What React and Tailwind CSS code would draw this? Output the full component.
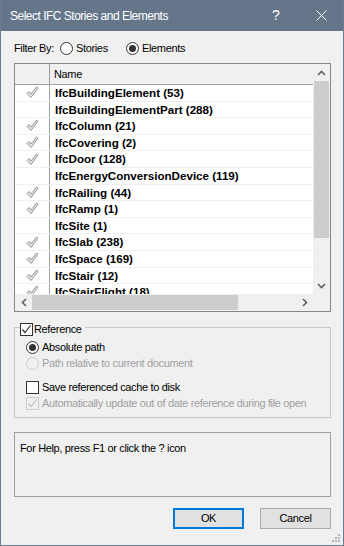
import React from "react";

const rows = [
  { name: "IfcBuildingElement (53)", checked: true },
  { name: "IfcBuildingElementPart (288)", checked: false },
  { name: "IfcColumn (21)", checked: true },
  { name: "IfcCovering (2)", checked: true },
  { name: "IfcDoor (128)", checked: true },
  { name: "IfcEnergyConversionDevice (119)", checked: false },
  { name: "IfcRailing (44)", checked: true },
  { name: "IfcRamp (1)", checked: true },
  { name: "IfcSite (1)", checked: false },
  { name: "IfcSlab (238)", checked: true },
  { name: "IfcSpace (169)", checked: true },
  { name: "IfcStair (12)", checked: true },
  { name: "IfcStairFlight (18)", checked: true },
];

const Tick = () => (
  <svg width="13" height="13" viewBox="0 0 13 13">
    <polygon
      points="1,7.5 3,5.5 5,8 10.5,1 12,2.2 5,11.5"
      fill="#e2e2e2"
      stroke="#8c8c8c"
      strokeWidth="0.9"
      strokeLinejoin="round"
    />
  </svg>
);

const Radio = ({ checked, disabled }) => (
  <span
    className={`w-[13px] h-[13px] rounded-full border flex items-center justify-center shrink-0 ${
      disabled ? "border-[#cccccc] bg-[#f0f0f0]" : "border-[#333333] bg-white"
    }`}
  >
    {checked && <span className="w-[7px] h-[7px] rounded-full bg-[#333333]" />}
  </span>
);

const Checkbox = ({ checked, disabled }) => (
  <span
    className={`w-[13px] h-[13px] border flex items-center justify-center shrink-0 ${
      disabled ? "border-[#cccccc] bg-[#f0f0f0]" : "border-[#333333] bg-white"
    }`}
  >
    {checked && (
      <svg width="11" height="11" viewBox="0 0 11 11">
        <polyline
          points="1.5,5.5 4,8.5 9.5,1.5"
          fill="none"
          stroke={disabled ? "#c4c4c4" : "#333333"}
          strokeWidth="1.2"
        />
      </svg>
    )}
  </span>
);

const App = () => {
  return (
    <div className="relative w-[344px] h-[546px] bg-[#f0f0f0] border-x border-b border-[#6c7b8f] flex flex-col font-['Liberation_Sans',Arial,sans-serif] text-[11px] tracking-[-0.35px] text-black whitespace-nowrap overflow-hidden">
      {/* Title bar */}
      <div className="h-[31px] -mx-px bg-[#66768a] flex items-center pl-[10px] text-white text-[12px] tracking-[-0.5px] shrink-0">
        <span className="flex-1">Select IFC Stories and Elements</span>
        <span className="w-[14px] text-[14px] mr-[30px]">?</span>
        <svg width="11" height="11" viewBox="0 0 11 11" className="mr-[17px]">
          <path d="M0.5 0.5 L10.5 10.5 M10.5 0.5 L0.5 10.5" stroke="#ffffff" strokeWidth="1" />
        </svg>
      </div>

      <div className="flex-1 flex flex-col pl-[13px] pr-[12px] pt-[8px]">
        {/* Filter by */}
        <div className="h-[18px] flex items-center">
          <span className="w-[46px]">Filter By:</span>
          <Radio />
          <span className="ml-[3px] w-[50px]">Stories</span>
          <Radio checked />
          <span className="ml-[3px]">Elements</span>
        </div>

        {/* List box */}
        <div className="mt-[6px] h-[249px] border border-[#828790] bg-white flex flex-col">
          <div className="flex h-[230px]">
            <div className="flex-1 flex flex-col overflow-hidden">
              <div className="h-[21px] shrink-0 flex bg-[#f0f0f0] border-b border-[#a0a0a0]">
                <div className="w-[35px] border-r border-[#a0a0a0]" />
                <div className="pl-[4px] flex items-center">Name</div>
              </div>
              {rows.map((r) => (
                <div key={r.name} className="h-[16.6px] shrink-0 flex border-b border-[#f0f0f0]">
                  <div className="w-[35px] border-r border-[#a0a0a0] flex items-center justify-center">
                    {r.checked && <Tick />}
                  </div>
                  <div className="pl-[5px] flex items-center font-bold text-[11.6px] tracking-normal">{r.name}</div>
                </div>
              ))}
            </div>
            {/* vertical scrollbar */}
            <div className="w-[17px] bg-[#f0f0f0] flex flex-col">
              <div className="h-[17px] flex items-center justify-center">
                <svg width="9" height="6" viewBox="0 0 9 6">
                  <path d="M1 5 L4.5 1.5 L8 5" fill="none" stroke="#606060" strokeWidth="1.6" />
                </svg>
              </div>
              <div className="h-[157px] bg-[#cdcdcd] mx-px" />
              <div className="flex-1" />
              <div className="h-[17px] flex items-center justify-center">
                <svg width="9" height="6" viewBox="0 0 9 6">
                  <path d="M1 1 L4.5 4.5 L8 1" fill="none" stroke="#606060" strokeWidth="1.6" />
                </svg>
              </div>
            </div>
          </div>
          {/* horizontal scrollbar */}
          <div className="h-[17px] flex bg-[#f0f0f0]">
            <div className="w-[17px] flex items-center justify-center">
              <svg width="6" height="9" viewBox="0 0 6 9">
                <path d="M5 1 L1.5 4.5 L5 8" fill="none" stroke="#606060" strokeWidth="1.6" />
              </svg>
            </div>
            <div className="w-[206px] bg-[#cdcdcd] my-px" />
            <div className="flex-1" />
            <div className="w-[17px] flex items-center justify-center">
              <svg width="6" height="9" viewBox="0 0 6 9">
                <path d="M1 1 L4.5 4.5 L1 8" fill="none" stroke="#606060" strokeWidth="1.6" />
              </svg>
            </div>
            <div className="w-[17px]" />
          </div>
        </div>

        {/* Reference group */}
        <div className="relative mt-[15px] h-[91px] border border-[#c8c8c8] pl-[11px] pt-[11px]">
          <div className="absolute -top-[7px] left-[5px] flex items-center bg-[#f0f0f0] pr-[3px]">
            <Checkbox checked />
            <span className="ml-[1px]">Reference</span>
          </div>
          <div className="h-[16px] flex items-center">
            <Radio checked />
            <span className="ml-[3px]">Absolute path</span>
          </div>
          <div className="h-[16px] flex items-center text-[#a0a0a0]">
            <Radio disabled />
            <span className="ml-[3px]">Path relative to current document</span>
          </div>
          <div className="h-[16px] mt-[8px] flex items-center">
            <Checkbox />
            <span className="ml-[3px]">Save referenced cache to disk</span>
          </div>
          <div className="h-[16px] flex items-center text-[#a0a0a0]">
            <Checkbox checked disabled />
            <span className="ml-[3px]">Automatically update out of date reference during file open</span>
          </div>
        </div>

        {/* Help box */}
        <div className="mt-[14px] h-[65px] border border-[#a0a0a0] pl-[5px] pt-[7px]">
          For Help, press F1 or click the ? icon
        </div>

        {/* Buttons */}
        <div className="mt-[11px] flex justify-end gap-[16px]">
          <button className="w-[71px] h-[21px] border-2 border-[#0078d7] bg-[#e1e1e1]">OK</button>
          <button className="w-[71px] h-[21px] border border-[#adadad] bg-[#e1e1e1]">Cancel</button>
        </div>
      </div>

      {/* size grip */}
      <svg width="10" height="10" viewBox="0 0 10 10" className="absolute right-[2px] bottom-[2px]">
        <rect x="7" y="1" width="2" height="2" fill="#b4b4b4" />
        <rect x="4" y="4" width="2" height="2" fill="#b4b4b4" />
        <rect x="7" y="4" width="2" height="2" fill="#b4b4b4" />
        <rect x="1" y="7" width="2" height="2" fill="#b4b4b4" />
        <rect x="4" y="7" width="2" height="2" fill="#b4b4b4" />
        <rect x="7" y="7" width="2" height="2" fill="#b4b4b4" />
      </svg>
    </div>
  );
};

export default App;
